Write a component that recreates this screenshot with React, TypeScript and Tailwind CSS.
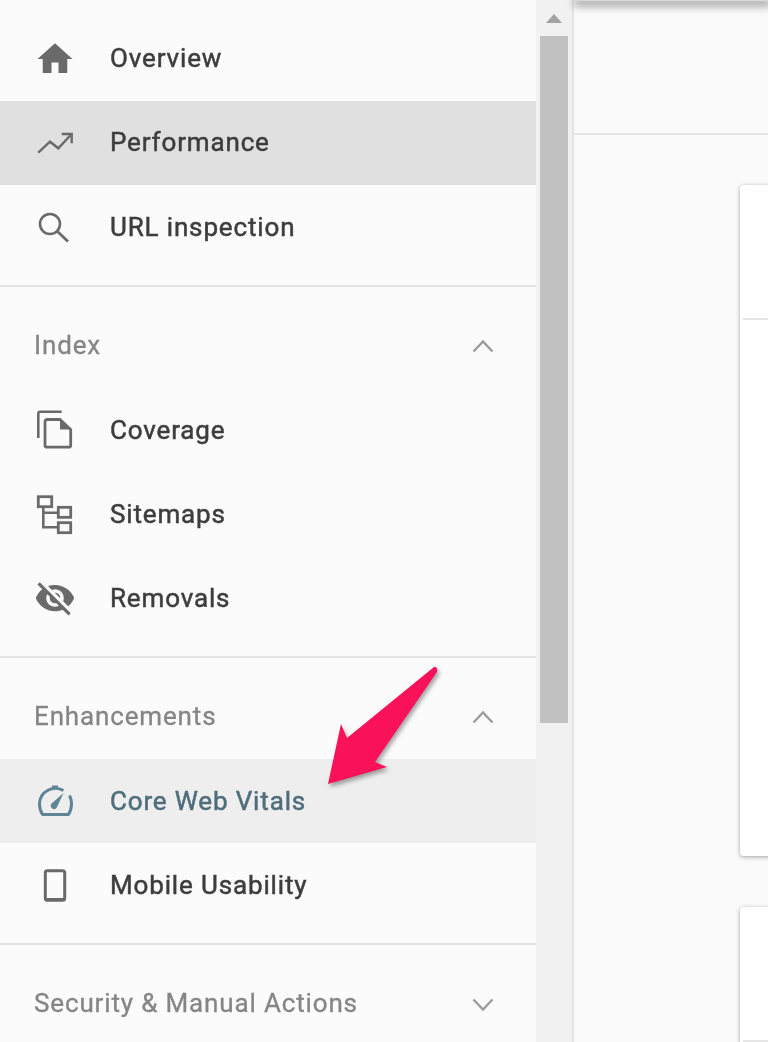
import React from "react";

const ink = "#6a6a6a";

function Svg({ children, color = ink }: { children: React.ReactNode; color?: string }) {
  return (
    <svg width="42" height="42" viewBox="0 0 42 42" fill="none" stroke={color} className="shrink-0">
      {children}
    </svg>
  );
}

const HomeIcon = () => (
  <svg width="42" height="42" viewBox="0 0 24 24" fill={ink} className="shrink-0">
    <path d="M10 20v-6h4v6h5v-8h3L12 3 2 12h3v8z" />
  </svg>
);
const TrendIcon = () => (
  <Svg>
    <path d="M4.3 30.7 16 19.7l8.3 6.6L36.7 13" strokeWidth="2.4" />
    <path d="M27.7 12h10v9.3" strokeWidth="2.4" />
  </Svg>
);
const SearchIcon = () => (
  <Svg>
    <circle cx="16" cy="18" r="10" strokeWidth="2.6" />
    <path d="M23.5 25.5 34 35.5" strokeWidth="2.8" />
  </Svg>
);
const CoverageIcon = () => (
  <Svg>
    <path d="M27.7 2.7H6a1.7 1.7 0 0 0-1.7 1.7V29" strokeWidth="2.6" />
    <path d="M13.5 10.5H26l10.7 10v15.7a2 2 0 0 1-2 2H13a2 2 0 0 1-2-2V13a2.5 2.5 0 0 1 2.5-2.5z" strokeWidth="2.8" />
    <path d="M26 10.5v10h10.7z" fill={ink} stroke="none" />
  </Svg>
);
const SitemapIcon = () => (
  <Svg>
    <rect x="4.3" y="3.7" width="13.4" height="10" strokeWidth="2.8" />
    <rect x="24.3" y="14.3" width="12.4" height="10" strokeWidth="2.8" />
    <rect x="24.3" y="29.7" width="12.4" height="10" strokeWidth="2.8" />
    <path d="M9.3 13.7v20.6h15M9.3 19.7h15" strokeWidth="2.6" />
  </Svg>
);
const RemovalIcon = () => (
  <svg width="42" height="42" viewBox="0 0 24 24" fill={ink} className="shrink-0">
    <path d="M12 7c2.76 0 5 2.24 5 5 0 .65-.13 1.26-.36 1.83l2.92 2.92c1.51-1.26 2.7-2.89 3.43-4.75-1.73-4.39-6-7.5-11-7.5-1.4 0-2.74.25-3.98.7l2.16 2.16C10.74 7.13 11.35 7 12 7zM2 4.27l2.28 2.28.46.46C3.08 8.3 1.78 10.02 1 12c1.73 4.39 6 7.5 11 7.5 1.55 0 3.03-.3 4.38-.84l.42.42L19.73 22 21 20.73 3.27 3 2 4.27zM7.53 9.8l1.55 1.55c-.05.21-.08.43-.08.65 0 1.66 1.34 3 3 3 .22 0 .44-.03.65-.08l1.55 1.55c-.67.33-1.41.53-2.2.53-2.76 0-5-2.24-5-5 0-.79.2-1.53.53-2.2zm4.31-.78l3.15 3.15.02-.16c0-1.66-1.34-3-3-3l-.17.01z" />
  </svg>
);
const GaugeIcon = () => (
  <Svg color="#5f8496">
    <path
      d="M29.5 10.5A16 16 0 0 0 5.5 23.5c0 4 1 8 3 11h26c2-3 3-7 3-11 0-3-.7-5.5-2-8"
      strokeWidth="3"
      strokeLinejoin="round"
    />
    <path d="M18 6.5h6" strokeWidth="2" />
    <path d="M29.5 13 22.8 27.6a3.2 3.2 0 0 1-5.4-3.8z" fill="#5f8496" stroke="none" />
  </Svg>
);
const MobileIcon = () => (
  <Svg>
    <rect x="11.3" y="6.7" width="19.4" height="29.6" rx="2" strokeWidth="3" />
    <path d="M11 35.4h20" strokeWidth="2.8" />
  </Svg>
);

function Chevron({ up }: { up: boolean }) {
  return (
    <svg width="24" height="24" viewBox="0 0 24 24" fill="none" stroke="#9b9b9b" strokeWidth="2.4" className="shrink-0">
      <path d={up ? "M2.5 17.5 12 7.5l9.5 10" : "M2.5 7.5l9.5 10 9.5-10"} />
    </svg>
  );
}

function Row({
  icon,
  label,
  bg = "",
  text = "text-[#3d3d3d]",
  lift = "-mt-px",
}: {
  icon: React.ReactNode;
  label: string;
  bg?: string;
  text?: string;
  lift?: string;
}) {
  return (
    <div className={`flex h-[84px] items-center gap-[34px] pl-[34px] ${bg}`}>
      {icon}
      <span className={`${lift} text-[26px] leading-none tracking-[0.85px] [-webkit-text-stroke:0.5px] ${text}`}>
        {label}
      </span>
    </div>
  );
}

function Header({ label, up }: { label: string; up: boolean }) {
  return (
    <div className="flex h-[85px] items-center justify-between pr-[41px] pl-[34px]">
      <span className="-mt-[2px] text-[26px] leading-none tracking-[0.85px] text-[#858585] [-webkit-text-stroke:0.3px]">
        {label}
      </span>
      <Chevron up={up} />
    </div>
  );
}

export default function App() {
  return (
    <div className="h-[1042px] w-[768px] overflow-hidden bg-[#fafafa]">
      <div
        className="relative flex h-[1042px] w-[768px] bg-[#fafafa] blur-[0.6px]"
        style={{ fontFamily: "Roboto, sans-serif" }}
      >
        <nav className="h-full w-[536px] shrink-0 bg-[#fbfbfb] pt-[17px]">
          <section className="border-b-2 border-[#e4e4e4] pb-4">
            <Row icon={<HomeIcon />} label="Overview" lift="-mt-[3px]" />
            <Row icon={<TrendIcon />} label="Performance" bg="bg-[#e0e0e0]" lift="-mt-[3px]" />
            <Row icon={<SearchIcon />} label="URL inspection" />
          </section>
          <section className="border-b-2 border-[#e4e4e4] pt-4 pb-4">
            <Header label="Index" up />
            <Row icon={<CoverageIcon />} label="Coverage" />
            <Row icon={<SitemapIcon />} label="Sitemaps" />
            <Row icon={<RemovalIcon />} label="Removals" />
          </section>
          <section className="border-b-2 border-[#e4e4e4] pt-4 pb-4">
            <Header label="Enhancements" up />
            <Row icon={<GaugeIcon />} label="Core Web Vitals" bg="bg-[#eeeeee]" text="text-[#4f6e7c]" />
            <Row icon={<MobileIcon />} label="Mobile Usability" />
          </section>
          <section className="pt-4">
            <Header label="Security & Manual Actions" up={false} />
          </section>
        </nav>

        <div className="flex h-full w-[36px] shrink-0 flex-col items-center bg-[#f1f1f1]">
          <div className="flex h-[36px] w-full items-center justify-center">
            <svg width="16" height="9" viewBox="0 0 16 9" fill="#a3a3a3">
              <path d="M8 0l8 9H0z" />
            </svg>
          </div>
          <div className="h-[687px] w-[28px] bg-[#c1c1c1]" />
        </div>

        <main className="min-w-0 flex-1 border-l-2 border-[#e4e4e4]">
          <div className="h-[135px] border-b-2 border-[#e6e6e6]">
            <div className="ml-[3px] h-px bg-[#d8d8d8] shadow-[0_2px_8px_3px_rgba(0,0,0,0.4)]" />
          </div>
          <div className="flex w-[400px] flex-col gap-[51px] pt-[50px] pl-[166px]">
            <div className="h-[671px] rounded-l bg-white pt-[133px] pl-[3px] shadow-[0_1px_4px_rgba(0,0,0,0.35)]">
              <div className="h-0.5 bg-[#e6e6e6]" />
            </div>
            <div className="h-[300px] rounded-l bg-white pt-[133px] pl-[3px] shadow-[0_1px_4px_rgba(0,0,0,0.35)]">
              <div className="h-0.5 bg-[#e6e6e6]" />
            </div>
          </div>
        </main>

        <svg
          width="130"
          height="140"
          viewBox="320 660 130 140"
          className="absolute top-[660px] left-[320px] drop-shadow-[2px_3px_2px_rgba(0,0,0,0.35)]"
        >
          <path d="M328 784l13-60 6 14 87-71c2-1 4 2 3 5l-62 90 12 5z" fill="#f9125a" />
        </svg>
      </div>
    </div>
  );
}
